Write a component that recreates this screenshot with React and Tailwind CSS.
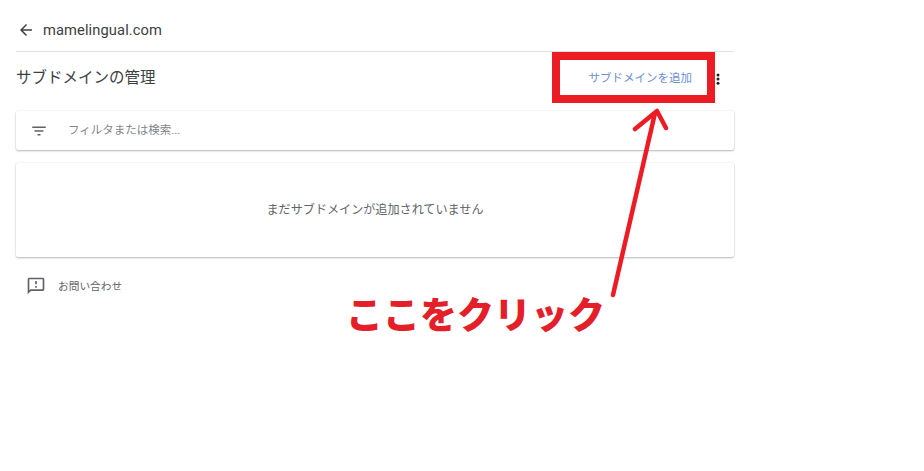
const jp = { fontFamily: '"Roboto", "Noto Sans CJK JP", sans-serif' };

export default function App() {
  return (
    <div className="relative w-[924px] h-[471px] bg-white overflow-hidden text-[#3c4043]" style={jp}>
      <div className="w-[718px] ml-4 flex flex-col">
        <div className="h-[52px] flex items-center gap-[8px] border-b border-[#e0e0e0] pt-[9px]">
          <svg width="18" height="18" viewBox="0 0 24 24" fill="#3c4043" className="ml-px">
            <path d="M20 11H7.830l5.590-5.590L12 4l-8 8 8 8 1.410-1.410L7.830 13H20v-2z" />
          </svg>
          <span className="text-[14.7px] tracking-[0.1px]">mamelingual.com</span>
        </div>

        <div className="h-[59px] flex items-center justify-between">
          <h1 className="text-[15.5px] font-normal mb-[5px]">サブドメインの管理</h1>
          <div className="flex items-center mb-[6px]">
            <span className="text-[11.5px] text-[#6d8fd0]">サブドメインを追加</span>
            <svg width="18" height="18" viewBox="0 0 24 24" fill="#202124" className="ml-[17px] mr-[7px]">
              <circle cx="12" cy="6.500" r="2" />
              <circle cx="12" cy="12" r="2" />
              <circle cx="12" cy="17.500" r="2" />
            </svg>
          </div>
        </div>

        <div className="h-[39px] flex items-center bg-white rounded-[2px] shadow-[0_1px_2px_rgba(60,64,67,0.35),0_0_2px_rgba(60,64,67,0.12)]">
          <svg width="18" height="18" viewBox="0 0 24 24" fill="#5f6368" className="ml-[14px]">
            <path d="M10 18h4v-2h-4v2zM3 6v2h18V6H3zm3 7h12v-2H6v2z" />
          </svg>
          <span className="ml-[20px] text-[11.5px] text-[#80868b]">フィルタまたは検索...</span>
        </div>

        <div className="h-[94px] mt-[13px] flex items-center justify-center bg-white rounded-[2px] shadow-[0_1px_2px_rgba(60,64,67,0.35),0_0_2px_rgba(60,64,67,0.12)]">
          <span className="text-[12.1px] text-[#5f6368]">まだサブドメインが追加されていません</span>
        </div>

        <div className="mt-[19px] h-[20px] flex items-center">
          <svg width="20" height="20" viewBox="0 0 24 24" fill="#5f6368" className="ml-[10px]">
            <path d="M20 2H4c-1.100 0-2 .9-2 2v18l4-4h14c1.100 0 2-.9 2-2V4c0-1.100-.9-2-2-2zm0 14H5.170L4 17.170V4h16v12zM11 12h2v2h-2zm0-6h2v4h-2z" />
          </svg>
          <span className="ml-[12px] mt-[2px] text-[10.7px] text-[#5f6368]">お問い合わせ</span>
        </div>
      </div>

      <div className="absolute left-[552px] top-[52px] w-[163px] h-[51px] border-[8px] border-[#ed1c24]" />

      <svg width="924" height="471" className="absolute left-0 top-0 pointer-events-none">
        <path d="M613 295 L655 113 M635 129 L657 111 L666 128" fill="none" stroke="#ed1c24" strokeWidth="4.500" strokeLinecap="round" strokeLinejoin="round" />
      </svg>

      <span
        className="absolute left-[346px] top-[287px] text-[37px] leading-[52px] font-black text-[#e3202a] whitespace-nowrap"
        style={{ fontFamily: '"Noto Sans CJK JP", sans-serif' }}
      >
        ここをクリック
      </span>
    </div>
  );
}
